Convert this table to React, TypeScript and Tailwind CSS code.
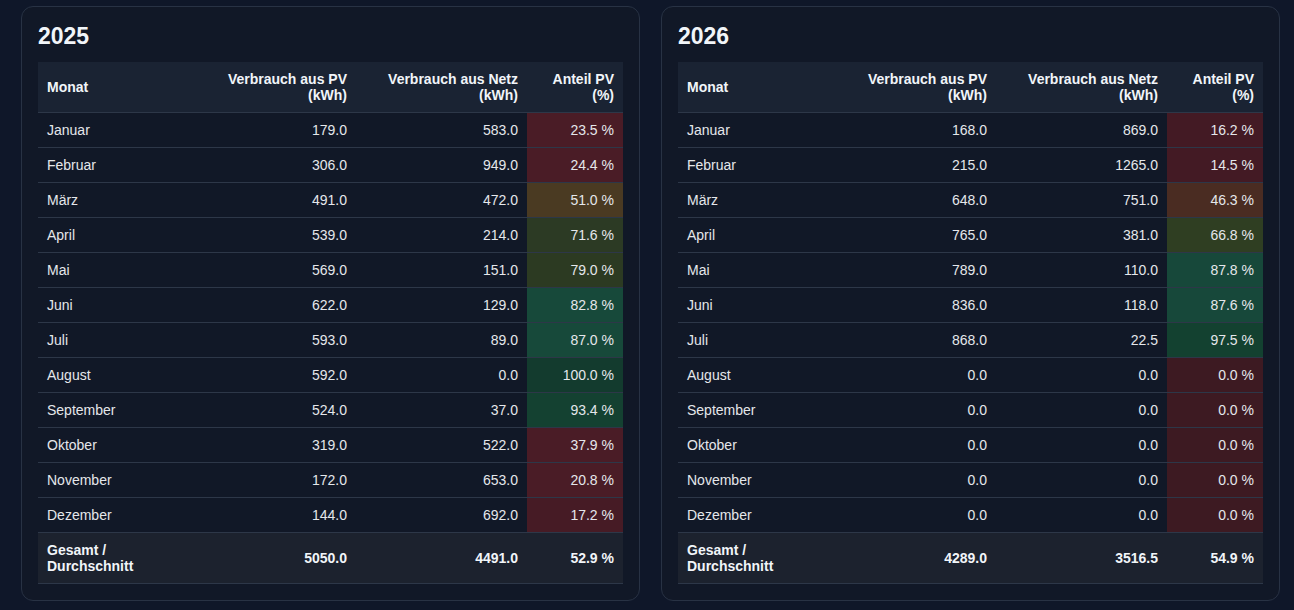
import React from "react";

type Row = { month: string; pv: string; netz: string; share: string; bg: string };

const months = [
  "Januar",
  "Februar",
  "März",
  "April",
  "Mai",
  "Juni",
  "Juli",
  "August",
  "September",
  "Oktober",
  "November",
  "Dezember",
];

const data2025: [string, string, string, string][] = [
  ["179.0", "583.0", "23.5 %", "#4a1c26"],
  ["306.0", "949.0", "24.4 %", "#4a1c26"],
  ["491.0", "472.0", "51.0 %", "#4a3a22"],
  ["539.0", "214.0", "71.6 %", "#2c3a24"],
  ["569.0", "151.0", "79.0 %", "#2c3a22"],
  ["622.0", "129.0", "82.8 %", "#17493a"],
  ["593.0", "89.0", "87.0 %", "#17493a"],
  ["592.0", "0.0", "100.0 %", "#133b2e"],
  ["524.0", "37.0", "93.4 %", "#144131"],
  ["319.0", "522.0", "37.9 %", "#4a1c26"],
  ["172.0", "653.0", "20.8 %", "#4a1c26"],
  ["144.0", "692.0", "17.2 %", "#461b25"],
];

const data2026: [string, string, string, string][] = [
  ["168.0", "869.0", "16.2 %", "#431a24"],
  ["215.0", "1265.0", "14.5 %", "#431a24"],
  ["648.0", "751.0", "46.3 %", "#4a2c22"],
  ["765.0", "381.0", "66.8 %", "#2f3e22"],
  ["789.0", "110.0", "87.8 %", "#17483a"],
  ["836.0", "118.0", "87.6 %", "#17483a"],
  ["868.0", "22.5", "97.5 %", "#134130"],
  ["0.0", "0.0", "0.0 %", "#3d1a22"],
  ["0.0", "0.0", "0.0 %", "#3d1a22"],
  ["0.0", "0.0", "0.0 %", "#3d1a22"],
  ["0.0", "0.0", "0.0 %", "#3d1a22"],
  ["0.0", "0.0", "0.0 %", "#3d1a22"],
];

const toRows = (d: [string, string, string, string][]): Row[] =>
  d.map(([pv, netz, share, bg], i) => ({ month: months[i], pv, netz, share, bg }));

const YearCard = ({
  year,
  rows,
  total,
}: {
  year: string;
  rows: Row[];
  total: [string, string, string];
}) => (
  <div className="rounded-xl border border-[#283244] bg-[#111827] px-4 pt-4 pb-4">
    <h2 className="mb-[13px] text-[23px] font-bold leading-[26px] text-[#f1f5f9]">{year}</h2>
    <table className="w-full table-fixed border-collapse text-sm text-[#e5e7eb]">
      <colgroup>
        <col className="w-[151px]" />
        <col className="w-[167px]" />
        <col className="w-[171px]" />
        <col className="w-[96px]" />
      </colgroup>
      <thead>
        <tr className="bg-[#1a2333] text-[#f1f5f9]">
          <th className="px-[9px] py-[9px] text-left font-bold leading-4">Monat</th>
          <th className="px-[9px] py-[9px] text-right font-bold leading-4">
            Verbrauch aus PV
            <br />
            (kWh)
          </th>
          <th className="px-[9px] py-[9px] text-right font-bold leading-4">
            Verbrauch aus Netz
            <br />
            (kWh)
          </th>
          <th className="px-[9px] py-[9px] text-right font-bold leading-4">
            Anteil PV
            <br />
            (%)
          </th>
        </tr>
      </thead>
      <tbody>
        {rows.map((r) => (
          <tr key={r.month} className="border-t border-[#2d3748]">
            <td className="px-[9px] py-[7px] leading-5">{r.month}</td>
            <td className="px-[9px] py-[7px] text-right leading-5">{r.pv}</td>
            <td className="px-[9px] py-[7px] text-right leading-5">{r.netz}</td>
            <td className="px-[9px] py-[7px] text-right leading-5" style={{ backgroundColor: r.bg }}>
              {r.share}
            </td>
          </tr>
        ))}
        <tr className="border-y border-[#2d3748] bg-[#1c222e] font-bold text-[#f1f5f9]">
          <td className="px-[9px] py-[9px] leading-4">
            Gesamt /
            <br />
            Durchschnitt
          </td>
          <td className="px-[9px] py-[9px] text-right leading-4">{total[0]}</td>
          <td className="px-[9px] py-[9px] text-right leading-4">{total[1]}</td>
          <td className="px-[9px] py-[9px] text-right leading-4">{total[2]}</td>
        </tr>
      </tbody>
    </table>
  </div>
);

export default function App() {
  return (
    <div
      className="min-h-screen bg-[#0f1729] pt-[6px] pl-[21px] pr-[14px]"
      style={{ fontFamily: '"Liberation Sans", Arial, sans-serif' }}
    >
      <div className="grid grid-cols-2 gap-[21px]">
        <YearCard year="2025" rows={toRows(data2025)} total={["5050.0", "4491.0", "52.9 %"]} />
        <YearCard year="2026" rows={toRows(data2026)} total={["4289.0", "3516.5", "54.9 %"]} />
      </div>
    </div>
  );
}
